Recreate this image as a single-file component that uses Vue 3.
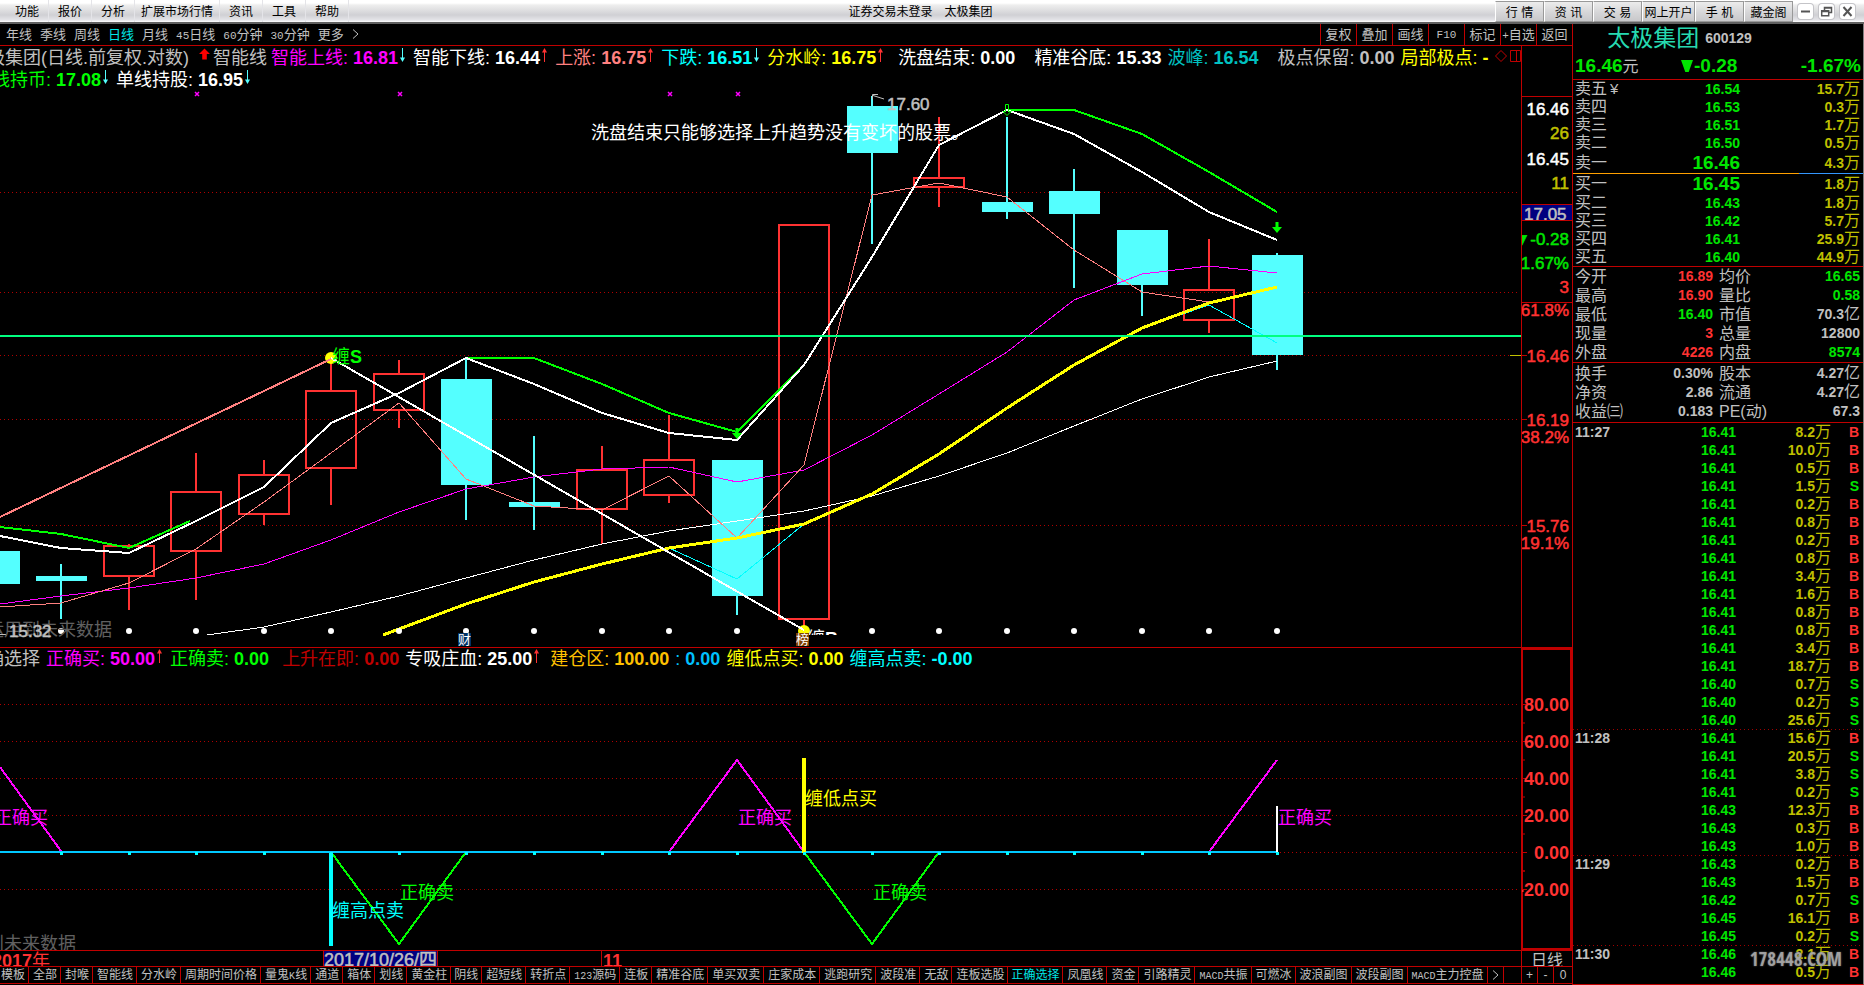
<script setup>
const menus = ['功能', '报价', '分析', '扩展市场行情', '资讯', '工具', '帮助']
const services = ['行 情', '资 讯', '交 易', '网上开户', '手 机', '藏金阁']
const periods = ['年线', '季线', '周线', '日线', '月线', '45日线', '60分钟', '30分钟', '更多']
const actions = ['复权', '叠加', '画线', 'F10', '标记', '+自选', '返回']
const tabs = [
  '模板', '全部', '封喉', '智能线', '分水岭', '周期时间价格', '量鬼K线', '通道', '箱体', '划线', '黄金柱',
  '阴线', '超短线', '转折点', '123源码', '连板', '精准谷底', '单买双卖', '庄家成本', '逃跑研究', '波段准',
  '无敌', '连板选股', '正确选择', '凤凰线', '资金', '引路精灵', 'MACD共振', '可燃冰', '波浪副图', '波段副图',
  'MACD主力控盘',
]
const split = (s) => s.match(/[\x21-\x7e]+|[^\x21-\x7e]+/g).map((t) => ({ t, latin: /^[\x21-\x7e]/.test(t) }))

const legendTop = [
  { label: '智能上线:', value: '16.81', tone: 'magenta', dir: 'down' },
  { label: '智能下线:', value: '16.44', tone: 'white', dir: 'up' },
  { label: '上涨:', value: '16.75', tone: 'salmon', dir: 'up' },
  { label: '下跌:', value: '16.51', tone: 'cyan', dir: 'down' },
  { label: '分水岭:', value: '16.75', tone: 'yellow', dir: 'up', space: 'mid' },
  { label: '洗盘结束:', value: '0.00', tone: 'white', space: 'wide' },
  { label: '精准谷底:', value: '15.33', tone: 'white' },
  { label: '波峰:', value: '16.54', tone: 'teal', space: 'wide' },
  { label: '极点保留:', value: '0.00', tone: 'silver' },
  { label: '局部极点:', value: '-', tone: 'yellow' },
]
const legendSecond = [
  { label: '单线持币:', value: '17.08', tone: 'lime', dir: 'down' },
  { label: '单线持股:', value: '16.95', tone: 'white', dir: 'down' },
]
const legendBottom = [
  { label: '正确买:', value: '50.00', tone: 'magenta', dir: 'up' },
  { label: '正确卖:', value: '0.00', tone: 'lime', space: 'mid' },
  { label: '上升在即:', value: '0.00', tone: 'brick' },
  { label: '专吸庄血:', value: '25.00', tone: 'white', dir: 'up', space: 'step' },
  { label: '建仓区:', value: '100.00', tone: 'amber' },
  { label: ':', value: '0.00', tone: 'sky' },
  { label: '缠低点买:', value: '0.00', tone: 'yellow' },
  { label: '缠高点卖:', value: '-0.00', tone: 'cyan' },
]

// x centre, high, body top, body bottom, low, rising
const candles = [
  [-6, 551, 551, 584, 584, false],
  [61, 564, 576, 581, 619, false],
  [129, 544, 546, 576, 610, true],
  [196, 453, 492, 551, 600, true],
  [264, 460, 475, 514, 525, true],
  [331, 363, 391, 468, 505, true],
  [399, 360, 374, 410, 428, true],
  [466, 358, 379, 485, 520, false],
  [534, 436, 502, 507, 530, false],
  [602, 446, 470, 509, 544, true],
  [669, 415, 460, 495, 503, true],
  [737, 460, 460, 596, 615, false],
  [804, 225, 225, 619, 631, true],
  [872, 96, 106, 153, 244, false],
  [939, 117, 178, 187, 207, true],
  [1007, 117, 202, 212, 219, false],
  [1074, 169, 191, 214, 288, false],
  [1142, 230, 230, 285, 316, false],
  [1209, 239, 290, 320, 333, true],
  [1277, 253, 255, 355, 370, false],
]
const marks = candles.slice(1).map((c) => c[0])
const lines = [
  { c: '#fff', w: 1, p: '207,635 264,627 331,612 399,596 466,578 534,560 602,544 669,531 737,521 804,511 872,496 939,476 1007,453 1074,426 1142,399 1209,377 1277,361' },
  { c: '#ff00ff', w: 1, p: '0,604 61,596 129,588 196,578 264,564 331,540 399,512 466,489 534,477 602,469 669,467 737,482 804,470 872,435 939,394 1007,352 1074,300 1142,274 1209,266 1277,273' },
  { c: '#00ffff', w: 1, p: '669,548 737,579 804,524' },
  { c: '#00ffff', w: 1, p: '1142,328 1209,305 1277,343' },
  { c: '#ff8080', w: 1, p: '0,607 61,603 129,583 196,549 264,502 331,453 399,403 466,479 534,506 602,510 669,476 737,538 804,465 872,195 939,183 1007,197 1074,250 1142,292 1209,302' },
  { c: '#ffff00', w: 3, p: '383,635 399,629 466,604 534,582 602,564 669,548 737,538 804,524 872,494 939,454 1007,408 1074,365 1142,328 1209,303 1277,287' },
  { c: '#00ff00', w: 2, p: '0,527 61,534 129,548 190,521' },
  { c: '#00ff00', w: 2, p: '466,358 534,358 602,384 669,413 737,432 800,369' },
  { c: '#00ff00', w: 2, p: '1007,110 1074,110 1142,134 1209,172 1277,212' },
  { c: '#fff', w: 2, p: '0,536 61,548 129,553 196,521 264,487 331,423 399,393 466,358 534,384 602,413 669,433 737,440 804,365 872,257 939,145 1007,110 1074,134 1142,172 1209,212 1277,240' },
  { c: '#ff8080', w: 2, p: '0,517 331,359' },
  { c: '#fff', w: 2, p: '331,358 804,630' },
]
const gridTop = [192, 292, 355, 419, 525]
const gridBottom = [704, 741, 778, 815, 852, 889]
const axisTop = [
  { y: 109, t: '16.46', tone: 'white' },
  { y: 133, t: '26', tone: 'gold' },
  { y: 159, t: '16.45', tone: 'white' },
  { y: 183, t: '11', tone: 'gold' },
  { y: 239, t: '▼-0.28', tone: 'green' },
  { y: 263, t: '-1.67%', tone: 'green' },
  { y: 287, t: '3', tone: 'red' },
  { y: 310, t: '61.8%', tone: 'red' },
  { y: 356, t: '16.46', tone: 'red', tick: true },
  { y: 420, t: '16.19', tone: 'red', tick: true },
  { y: 437, t: '38.2%', tone: 'red' },
  { y: 526, t: '15.76', tone: 'red', tick: true },
  { y: 543, t: '19.1%', tone: 'red' },
]
const axisBottom = ['80.00', '60.00', '40.00', '20.00', '0.00', '-20.00']

const asks = [
  ['卖五', '16.54', '15.7', '¥'], ['卖四', '16.53', '0.3'], ['卖三', '16.51', '1.7'],
  ['卖二', '16.50', '0.5'], ['卖一', '16.46', '4.3'],
]
const bids = [
  ['买一', '16.45', '1.8'], ['买二', '16.43', '1.8'], ['买三', '16.42', '5.7'],
  ['买四', '16.41', '25.9'], ['买五', '16.40', '44.9'],
]
const stats = [
  ['今开', '16.89', 'red', '均价', '16.65', '', 'green'],
  ['最高', '16.90', 'red', '量比', '0.58', '', 'green'],
  ['最低', '16.40', 'green', '市值', '70.3', '亿', 'silver'],
  ['现量', '3', 'red', '总量', '12800', '', 'silver'],
  ['外盘', '4226', 'red', '内盘', '8574', '', 'green'],
]
const funds = [
  ['换手', '0.30%', 'silver', '股本', '4.27', '亿', 'silver'],
  ['净资', '2.86', 'silver', '流通', '4.27', '亿', 'silver'],
  ['收益㈢', '0.183', 'silver', 'PE(动)', '67.3', '', 'silver'],
]
const raw = [
  ['11:27', '41 8.2 B|41 10.0 B|41 0.5 B|41 1.5 S|41 0.2 B|41 0.8 B|41 0.2 B|41 0.8 B|41 3.4 B|41 1.6 B|41 0.8 B|41 0.8 B|41 3.4 B|41 18.7 B|40 0.7 S|40 0.2 S|40 25.6 S'],
  ['11:28', '41 15.6 B|41 20.5 S|41 3.8 S|41 0.2 S|43 12.3 B|43 0.3 B|43 1.0 B'],
  ['11:29', '43 0.2 B|43 1.5 B|42 0.7 S|45 16.1 B|45 0.2 S'],
  ['11:30', '46 2.1 B|46 0.5 B'],
]
const ticks = raw.flatMap(([time, list]) =>
  list.split('|').map((row, i) => {
    const [cents, vol, side] = row.split(' ')
    return { time: i ? '' : time, price: '16.' + cents, vol, side, first: !i && time !== '11:27' }
  }),
)
</script>

<template>
  <div class="app">
    <header class="menubar">
      <nav class="menus">
        <button v-for="m in menus" :key="m" type="button" :class="{ long: m.length > 4 }">{{ m }}</button>
      </nav>
      <div class="caption"><span>证券交易未登录</span><span>太极集团</span></div>
      <div class="services">
        <button v-for="s in services" :key="s" type="button" :class="{ wider: s === '网上开户' }">{{ s }}</button>
      </div>
      <div class="window-buttons">
        <button type="button" aria-label="最小化">
          <svg viewBox="0 0 15 15"><path d="M3 7.5h9" stroke="#555" stroke-width="2" /></svg>
        </button>
        <button type="button" aria-label="还原">
          <svg viewBox="0 0 15 15" fill="none" stroke="#555" stroke-width="1.5"><path d="M5.5 6V3.5h7v5H10M5.5 4h7" /><path d="M2.7 6.7h7v5h-7zM2.7 7.5h7" /></svg>
        </button>
        <button type="button" aria-label="关闭">
          <svg viewBox="0 0 15 15"><path d="M3.5 3l8 9M11.500 3l-8 9" stroke="#555" stroke-width="2" /></svg>
        </button>
      </div>
    </header>

    <div class="workspace">
      <main class="main">
        <div class="periodbar">
          <nav class="periods">
            <button v-for="p in periods" :key="p" type="button" :class="{ on: p === '日线' }">
              <span v-for="(s, i) in split(p)" :key="i" :class="{ latin: s.latin }">{{ s.t }}</span>
            </button>
            <svg class="chev" viewBox="0 0 7 10" fill="none" stroke="#c0c0c0"><path d="M1 0.500L6 5L1 9.500" /></svg>
          </nav>
          <div class="actions">
            <button v-for="a in actions" :key="a" type="button">
              <span v-for="(s, i) in split(a)" :key="i" :class="{ latin: s.latin }">{{ s.t }}</span>
            </button>
          </div>
        </div>

        <section class="panel">
          <div class="plot">
            <div class="legends two">
              <div class="legend first">
                <span class="silver title">太极集团(日线.前复权.对数)</span>
                <svg class="bigarrow" viewBox="0 0 12 12"><path d="M6 0l6 6H8.500v6h-5V6H0z" fill="#f00" /></svg>
                <span class="silver name">智能线</span>
                <span v-for="l in legendTop" :key="l.label" class="item" :class="[l.tone, l.space]">
                  {{ l.label }}<b>{{ l.value }}</b>
                  <svg v-if="l.dir" class="arrow" :class="l.dir" viewBox="0 0 9 14"><path d="M4.500 4v10" /><path class="head" d="M2 4.500L4.500 0L7 4.500z" /></svg>
                </span>
                <svg class="marks" viewBox="0 0 26 12" fill="none" stroke="#c00000"><path d="M6 0.500L11.500 6L6 11.500L0.500 6z" /><path d="M15.500 0.500h10v11h-10zM21.500 0.500v11" /></svg>
              </div>
              <div class="legend second">
                <span v-for="l in legendSecond" :key="l.label" class="item" :class="l.tone">
                  {{ l.label }}<b>{{ l.value }}</b>
                  <svg class="arrow" :class="l.dir" viewBox="0 0 9 14"><path d="M4.500 4v10" /><path class="head" d="M2 4.500L4.500 0L7 4.500z" /></svg>
                </span>
              </div>
            </div>
            <svg class="chart" viewBox="0 90 1521 557" role="img" aria-label="日线图">
              <defs><clipPath id="plotArea"><rect x="0" y="90" width="1521" height="545" /></clipPath></defs>
              <g class="grid"><line v-for="y in gridTop" :key="y" x1="0" x2="1518" :y1="y + 0.5" :y2="y + 0.5" /></g>
              <g shape-rendering="crispEdges">
                <template v-for="c in candles" :key="c[0]">
                  <g v-if="c[5]" stroke="#ff3232" stroke-width="2" fill="none">
                    <path :d="`M${c[0]} ${c[1]}V${c[2]}M${c[0]} ${c[3]}V${c[4]}`" />
                    <rect :x="c[0] - 25" :y="c[2]" width="50" :height="c[3] - c[2]" />
                  </g>
                  <g v-else fill="#54ffff">
                    <rect :x="c[0] - 1" :y="c[1]" width="2" :height="c[4] - c[1]" />
                    <rect :x="c[0] - 25" :y="c[2]" width="51" :height="c[3] - c[2]" />
                  </g>
                </template>
              </g>
              <circle cx="331" cy="358" r="6" fill="#ff0" />
              <circle cx="804" cy="631" r="6" fill="#ff0" />
              <g shape-rendering="crispEdges" fill="none">
                <polyline v-for="(l, i) in lines" :key="i" :points="l.p" :stroke="l.c" :stroke-width="l.w" />
                <line x1="0" x2="1521" y1="336" y2="336" stroke="#00ff80" stroke-width="2" />
                <line x1="1510" x2="1521" y1="355.500" y2="355.500" stroke="#c0c000" />
                <path d="M0 634.500H6" stroke="#c0c0c0" />
              </g>
              <g fill="#fff"><circle v-for="x in marks" v-show="x !== 804" :key="x" :cx="x" cy="631" r="3" /></g>
              <path v-for="x in [197, 400, 670, 738]" :key="'m' + x" :d="`M${x - 2} 92l4 4m0 -4l-4 4`" stroke="#f0f" stroke-width="1.500" />
              <path d="M1005.500 104.500h3v7h2.500l-4 4l-4 -4h2.500z" fill="none" stroke="#0f0" />
              <path v-for="p in [[1277, 222], [737, 428]]" :key="p[0]" :d="`M${p[0] - 1.500} ${p[1]}h3v5h3.500l-5 6l-5 -6h3.500z`" fill="#0f0" />
              <path d="M884 99L873 95.500M878 94.500h-5.500v5" fill="none" stroke="#c0c0c0" />
              <text x="887" y="110" class="n17 firm silver">17.60</text>
              <text x="591" y="139" fill="#fff">洗盘结束只能够选择上升趋势没有变坏的股票。</text>
              <text x="332" y="363" fill="#0f0">缠<tspan font-weight="700">S</tspan></text>
              <text x="-14" y="636" fill="#606060">运用到未来数据</text>
              <text x="9" y="637" class="n17 firm silver">15.32</text>
              <g clip-path="url(#plotArea)"><text x="807" y="645" fill="#fff">缠<tspan font-weight="700">B</tspan></text></g>
              <rect x="458" y="633" width="13" height="13" fill="#003264" />
              <text x="458" y="644" class="badge">财</text>
              <rect x="796" y="633" width="13" height="13" fill="#804000" />
              <text x="796" y="644" class="badge">榜</text>
            </svg>
          </div>
          <svg class="axis" viewBox="1522 46 50 601" role="img" aria-label="价格轴">
            <rect x="1522" y="205" width="50" height="15" fill="#000080" />
            <text x="1524" y="220" class="n17 firm silver">17.05</text>
            <path d="M1522 96.500h50M1522 204.500h50M1522 220.500h50M1522 302.500h50" stroke="#c00000" />
            <g v-for="a in axisTop" :key="a.y">
              <path v-if="a.tick" :d="`M1522 ${a.y - 0.500}h5`" stroke="#c00000" />
              <text x="1569" :y="a.y + 6" class="n17 firm end" :class="a.tone">{{ a.t }}</text>
            </g>
          </svg>
        </section>

        <section class="panel lower">
          <div class="plot">
            <div class="legends one">
              <div class="legend third">
                <span class="silver title">正确选择</span>
                <span v-for="l in legendBottom" :key="l.label" class="item" :class="[l.tone, l.space]">
                  {{ l.label }}<b>{{ l.value }}</b>
                  <svg v-if="l.dir" class="arrow" :class="l.dir" viewBox="0 0 9 14"><path d="M4.500 4v10" /><path class="head" d="M2 4.500L4.500 0L7 4.500z" /></svg>
                </span>
              </div>
            </div>
            <svg class="chart" viewBox="0 669 1521 281" role="img" aria-label="正确选择指标">
              <g class="grid"><line v-for="y in gridBottom" :key="y" x1="0" x2="1518" :y1="y + 0.5" :y2="y + 0.5" /></g>
              <g shape-rendering="crispEdges" fill="none" stroke-width="2">
                <path d="M0 767L61 851M669 852L737 760L804 852M1209 852L1277 760" stroke="#f0f" />
                <path d="M331 852L399 944L466 852M804 852L872 944L939 852" stroke="#0f0" />
                <path d="M0 852H1278" stroke="#00c8ff" />
                <path d="M804 758V853" stroke="#ff0" stroke-width="4" />
                <path d="M1277 806V852" stroke="#fff" />
                <path d="M331 853V946" stroke="#0ff" stroke-width="4" />
                <path v-for="x in marks" :key="x" :d="`M${x - 1} 853h3`" stroke="#0ff" stroke-width="3" />
              </g>
              <g fill="#f0f"><text x="-6" y="824">正确买</text><text x="738" y="824">正确买</text><text x="1278" y="824">正确买</text></g>
              <g fill="#0f0"><text x="400" y="899">正确卖</text><text x="873" y="899">正确卖</text></g>
              <text x="805" y="805" fill="#ff0">缠低点买</text>
              <text x="332" y="917" fill="#0ff">缠高点卖</text>
              <text x="-50" y="950" fill="#606060">运用到未来数据</text>
            </svg>
          </div>
          <svg class="axis" viewBox="1522 648 50 302" role="img" aria-label="指标轴">
            <rect x="1522" y="649" width="49" height="300" fill="none" stroke="#c00000" stroke-width="2" />
            <g v-for="(t, i) in axisBottom" :key="t">
              <path :d="`M1523 ${704.500 + i * 37}h4M1523 ${723 + i * 37 - (i > 4 ? 37 : 0)}h2`" stroke="#c00000" />
              <text x="1569" :y="711 + i * 37" class="end red" font-weight="700">{{ t }}</text>
            </g>
          </svg>
        </section>

        <div class="timeline">
          <svg class="chart" viewBox="0 951 1521 15" role="img" aria-label="时间轴">
            <text x="-8" y="967" class="red" font-weight="700">2017<tspan font-weight="400">年</tspan></text>
            <rect x="323" y="951" width="115" height="15" fill="#000080" />
            <path d="M323.500 951v15M437.500 951v15M601.500 951v15" stroke="#c00000" />
            <text x="324" y="966" class="firm silver">2017/10/26/四</text>
            <text x="603" y="967" class="red" font-weight="700">11</text>
          </svg>
          <button type="button" class="scale">日线</button>
        </div>

        <div class="tabbar">
          <nav class="tabs">
            <button v-for="t in tabs" :key="t" type="button" :class="{ on: t === '正确选择' }">
              <span v-for="(s, i) in split(t)" :key="i" :class="{ latin: s.latin }">{{ s.t }}</span>
            </button>
            <button type="button" aria-label="更多指标" class="more">
              <svg class="chev" viewBox="0 0 7 10" fill="none" stroke="#c0c0c0"><path d="M1 0.500L6 5L1 9.500" /></svg>
            </button>
          </nav>
          <div class="zoomers">
            <button type="button">+</button><button type="button">-</button><button type="button">0</button>
          </div>
        </div>
      </main>

      <aside class="side">
        <div class="stock"><h1>太极集团</h1><span>600129</span></div>
        <div class="quote">
          <span>16.46<i>元</i></span><span class="change"><svg viewBox="0 0 14 14"><path d="M0 0h14L9 14H5z" fill="#00e600" /></svg>-0.28</span><span>-1.67%</span>
        </div>
        <table class="book asks">
          <tr v-for="r in asks" :key="r[0]" :class="{ best: r[0] === '卖一' }">
            <th scope="row">{{ r[0] }}<small v-if="r[3]">{{ r[3] }}</small></th><td class="green">{{ r[1] }}</td><td class="gold">{{ r[2] }}<i>万</i></td>
          </tr>
        </table>
        <div class="ratio"><span></span></div>
        <table class="book">
          <tr v-for="r in bids" :key="r[0]" :class="{ best: r[0] === '买一' }">
            <th scope="row">{{ r[0] }}</th><td class="green">{{ r[1] }}</td><td class="gold">{{ r[2] }}<i>万</i></td>
          </tr>
        </table>
        <table class="stats">
          <tr v-for="r in stats" :key="r[0]">
            <th scope="row">{{ r[0] }}</th><td :class="r[2]">{{ r[1] }}</td>
            <th scope="row">{{ r[3] }}</th><td :class="r[6]">{{ r[4] }}<i>{{ r[5] }}</i></td>
          </tr>
        </table>
        <table class="stats funds">
          <tr v-for="r in funds" :key="r[0]">
            <th scope="row">{{ r[0] }}</th><td :class="r[2]">{{ r[1] }}</td>
            <th scope="row">{{ r[3] }}</th><td :class="r[6]">{{ r[4] }}<i>{{ r[5] }}</i></td>
          </tr>
        </table>
        <table class="ticks">
          <tr v-for="(t, i) in ticks" :key="i" :class="{ first: t.first }">
            <td class="silver">{{ t.time }}</td><td class="green">{{ t.price }}</td><td class="gold">{{ t.vol }}<i>万</i></td>
            <td :class="t.side === 'B' ? 'red' : 'green'">{{ t.side }}</td>
          </tr>
        </table>
        <div class="stamp">178448.COM</div>
      </aside>
    </div>
  </div>
</template>

<style>
body {
  background: #000;
}
</style>

<style scoped>
.app {
  display: flex;
  flex-direction: column;
  min-height: 100vh;
  background: #000;
  color: #c0c0c0;
  font-family: "Liberation Sans", "Noto Sans CJK SC", sans-serif;
  font-size: 12px;
  overflow: hidden;
}
button {
  margin: 0;
  padding: 0;
  border: 0;
  background: none;
  color: inherit;
  font: inherit;
  white-space: nowrap;
}
svg {
  display: block;
}
i {
  font-style: normal;
}

.menubar {
  display: flex;
  align-items: stretch;
  height: 22px;
  border-bottom: 2px solid #606060;
  background: linear-gradient(#fff 0, #fff 3px, #eee 5px, #d0d0d4 15px, #e4e4e8 20px, #fff 22px);
  color: #000;
}
.menus {
  display: flex;
  padding-left: 6px;
}
.menus button {
  padding: 0 9px 1px;
  border-right: 1px solid #e4e4e8;
}
.menus .long {
  padding: 0 6px 1px;
}
.caption {
  flex: 1;
  display: flex;
  justify-content: center;
  align-items: center;
  gap: 12px;
  padding: 0 3px 1px 0;
}
.services {
  display: flex;
  padding-top: 1px;
}
.services button {
  box-sizing: border-box;
  width: 49px;
  padding-bottom: 1px;
  border: 1px solid #999;
  border-left-color: #fff;
  background: linear-gradient(#ececec, #d4d4d6 60%, #c8c8ca);
}
.services .wider {
  width: 53px;
}
.window-buttons {
  display: flex;
  align-items: center;
  gap: 6px;
  padding: 0 9px 0 5px;
}
.window-buttons button {
  width: 15px;
  height: 15px;
  border-radius: 3px;
  background: #fff;
  box-shadow: 0 0 0 1px #c4c4c8;
}

.workspace {
  flex: 1;
  display: flex;
}
.main {
  flex: 1;
  min-width: 0;
  display: flex;
  flex-direction: column;
}
.latin {
  font-family: "Liberation Mono", monospace;
  font-size: 10px;
}
.on {
  color: #00e6e6;
}

.periodbar {
  display: flex;
  justify-content: space-between;
  height: 21px;
  border-bottom: 1px solid #c00000;
  font-size: 13px;
}
.periodbar .latin {
  font-size: 11px;
}
.periods {
  display: flex;
  align-items: center;
  gap: 8px;
  padding: 0 0 2px 6px;
}
.chev {
  width: 7px;
  height: 10px;
}
.actions {
  display: flex;
}
.actions button {
  box-sizing: border-box;
  width: 36px;
  padding-bottom: 2px;
  border-left: 1px solid #c00000;
}

.panel {
  display: grid;
  grid-template-columns: minmax(0, 1fr) 50px;
  column-gap: 1px;
  border-bottom: 1px solid #c00000;
  background: linear-gradient(#c00000, #c00000) right 50px top / 1px 100% no-repeat;
}
.plot {
  overflow: hidden;
}
.legends {
  box-sizing: border-box;
  overflow: hidden;
  font-size: 18px;
}
.two {
  height: 44px;
  padding-top: 1px;
}
.one {
  height: 21px;
}
.legend {
  display: flex;
  align-items: center;
  height: 22px;
  line-height: 22px;
  white-space: nowrap;
}
.first {
  margin-left: -31px;
}
.second {
  margin-left: -26px;
}
.third {
  margin-left: -32px;
}
.first .title {
  width: 230px;
}
.third .title {
  width: 78px;
}
.bigarrow {
  width: 11px;
  height: 12px;
  margin: 0 3px 8px 0;
}
.name {
  width: 58px;
}
.item {
  display: flex;
  align-items: center;
  margin-right: 6px;
}
.item b {
  margin-left: 5px;
}
.step {
  margin-right: 9px;
}
.mid {
  margin-right: 13px;
}
.wide {
  margin-right: 19px;
}
.arrow {
  width: 9px;
  height: 14px;
  margin-bottom: 6px;
  stroke: #ff3232;
  fill: #ff3232;
}
.head {
  stroke: none;
}
.down {
  transform: rotate(180deg);
  stroke: #54ffff;
  fill: #54ffff;
}
.marks {
  width: 26px;
  height: 12px;
  margin-bottom: 4px;
}
.chart {
  width: 100%;
  height: auto;
}
.axis {
  width: 50px;
  height: 100%;
}
.grid line {
  stroke: #b00000;
  stroke-dasharray: 1 3;
  shape-rendering: crispEdges;
}
text {
  font-size: 18px;
}
.n17 {
  font-size: 17px;
}
.badge {
  font-size: 13px;
  fill: #fff;
}
.end {
  text-anchor: end;
}
.firm {
  stroke: currentColor;
  stroke-width: 0.5px;
}

.white { color: #fff; fill: #fff; }
.silver { color: #c0c0c0; fill: #c0c0c0; }
.magenta { color: #f0f; }
.salmon { color: #ff8080; }
.cyan { color: #0ff; }
.teal { color: #00c0c0; }
.yellow { color: #ff0; }
.lime { color: #0f0; }
.brick { color: #c00000; }
.amber { color: #ffc000; }
.sky { color: #00c0ff; }
.red { color: #ff3232; fill: #ff3232; }
.green { color: #00e600; fill: #00e600; }
.gold { color: #c0c000; fill: #c0c000; }

.timeline {
  display: grid;
  grid-template-columns: minmax(0, 1fr) 50px;
  column-gap: 1px;
  height: 15px;
  border-bottom: 1px solid #c00000;
  background: linear-gradient(#c00000, #c00000) right 50px top / 1px 100% no-repeat;
  overflow: hidden;
}
.scale {
  height: 20px;
  font-size: 16px;
  line-height: 20px;
}
.tabbar {
  display: flex;
  justify-content: space-between;
  height: 16px;
  border-bottom: 1px solid #c00000;
  line-height: 16px;
}
.tabs {
  display: flex;
  min-width: 0;
  overflow: hidden;
}
.tabs button {
  padding: 0 3px 0 4px;
  border-right: 1px solid #c00000;
}
.tabs button:nth-child(12n) {
  padding-left: 3px;
}
.tabs button:first-child {
  padding-left: 1px;
}
.tabs .more {
  padding-right: 4px;
}
.zoomers {
  display: flex;
}
.zoomers button {
  box-sizing: border-box;
  width: 16px;
  border-left: 1px solid #c00000;
}
.zoomers button:last-child {
  width: 19px;
}

.side {
  position: relative;
  box-sizing: border-box;
  width: 292px;
  border: solid #c00000;
  border-width: 0 1px 1px 1px;
  border-right-color: #808080;
  font-size: 14px;
  font-weight: 700;
}
.stock {
  display: flex;
  justify-content: center;
  align-items: center;
  gap: 6px;
  height: 28px;
  padding-right: 77px;
}
.stock h1 {
  margin: 0;
  color: #26d9b0;
  font-size: 23px;
  font-weight: 400;
  line-height: 28px;
}
.quote {
  display: flex;
  justify-content: space-between;
  align-items: center;
  height: 27px;
  padding: 0 2px;
  border-bottom: 1px solid #c00000;
  color: #00e600;
  font-size: 19px;
}
.quote i {
  color: #c0c0c0;
}
.change {
  display: flex;
  align-items: center;
  margin-right: 22px;
}
.change svg {
  width: 14px;
  height: 12px;
}
i {
  font-size: 16px;
  font-weight: 400;
  line-height: 0;
}
table {
  width: 100%;
  table-layout: fixed;
  border-collapse: separate;
  border-spacing: 0;
}
th,
td {
  height: 18px;
  padding: 0;
  line-height: 18px;
  text-align: right;
  white-space: nowrap;
}
th {
  color: #c0c0c0;
  font-size: 16px;
  font-weight: 400;
  text-align: left;
}
small {
  padding-left: 3px;
  font-size: 15px;
}
.book th {
  width: 80px;
  padding-left: 2px;
}
.book td:nth-child(2) {
  width: 85px;
}
.book td:last-child,
.stats td:last-child {
  padding-right: 3px;
}
.best th,
.best td {
  height: 20px;
  line-height: 20px;
}
.asks .best th,
.asks .best td {
  padding-top: 1px;
}
.best .green {
  font-size: 19px;
}
.ratio {
  height: 1px;
  background: #3296ff;
}
.ratio span {
  display: block;
  width: 78%;
  height: 1px;
  background: #ffa000;
}
.stats {
  border-top: 1px solid #c00000;
}
.stats th,
.stats td {
  height: 19px;
  line-height: 19px;
}
.stats th:first-child {
  width: 60px;
  padding-left: 2px;
}
.stats td:nth-child(2) {
  width: 78px;
}
.stats th:nth-child(3) {
  width: 60px;
  padding-left: 6px;
}
.funds {
  padding: 1px 0;
  border-bottom: 1px solid #c00000;
}
.ticks td:first-child {
  width: 60px;
  padding-left: 2px;
  text-align: left;
}
.ticks td:nth-child(2) {
  width: 101px;
}
.ticks td:nth-child(3) {
  width: 95px;
}
.ticks td:last-child {
  padding-right: 4px;
}
.ticks .first td {
  background: repeating-linear-gradient(90deg, #a00000 0 1px, transparent 1px 4px) top / 100% 1px no-repeat;
}
.stamp {
  position: absolute;
  right: 21px;
  bottom: 12px;
  color: rgba(176, 176, 176, 0.85);
  font-family: "Liberation Sans Narrow", "Open Sans Condensed", "Liberation Sans", sans-serif;
  font-size: 19px;
  text-shadow: 0 0 2px #666;
}
</style>
